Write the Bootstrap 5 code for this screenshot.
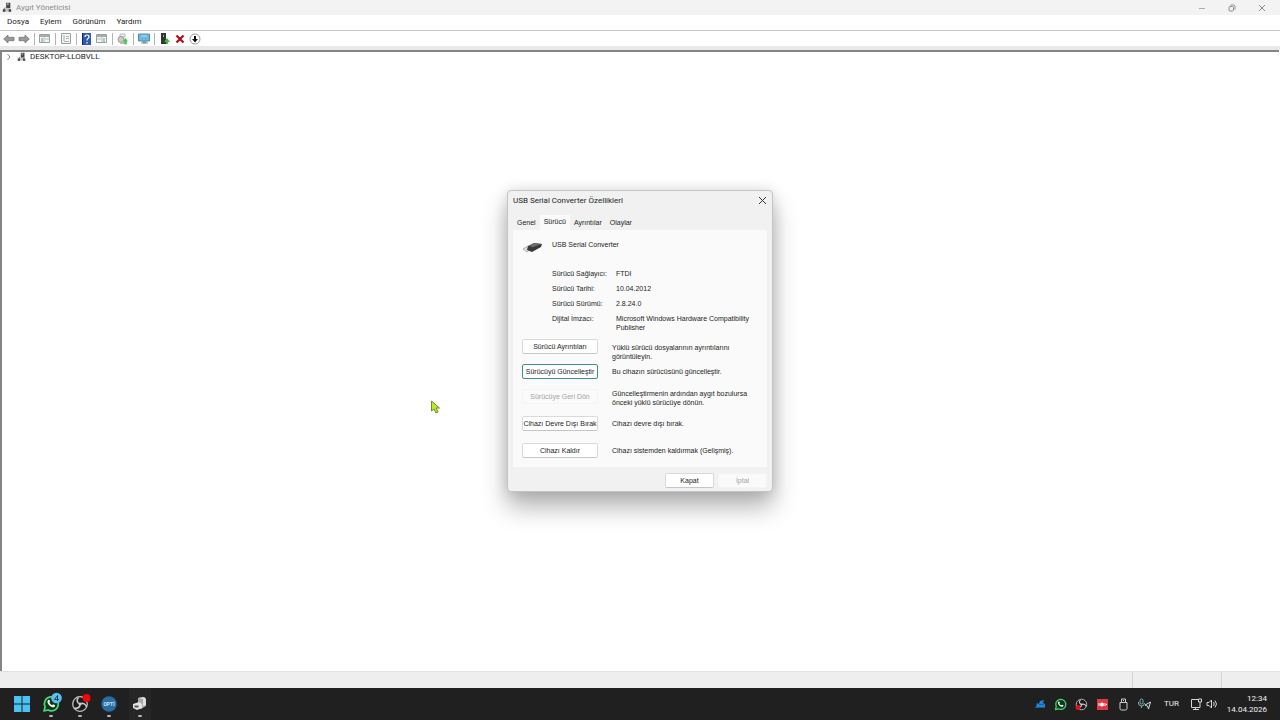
<!DOCTYPE html>
<html lang="tr">
<head>
<meta charset="utf-8">
<meta name="viewport" content="width=device-width, initial-scale=1">
<title>Aygıt Yöneticisi</title>
<link href="https://cdn.jsdelivr.net/npm/bootstrap@5.3.0/dist/css/bootstrap.min.css" rel="stylesheet">
<style>
body{font-family:Roboto,"Noto Sans",sans-serif;font-size:8px;line-height:10px;color:#1c1c1c;background:#fff}
button{font:inherit;color:inherit;background:none;border:0;padding:0}
svg{display:block;flex:none}
.titlebar{height:15px;background:#f3f3f3;color:#8c8c8c;padding:0 3px 0 2px}
.win-ctl{width:30px;height:15px;display:grid;place-items:center}
.menubar{height:15px;padding:0 7px 1px;gap:11px}
.toolbar{height:16px;border-top:1px solid #c4c4c4;padding-left:2px;gap:2px}
.tool{width:13px;height:13px;display:grid;place-items:center}
.sep{width:1px;height:12px;background:#b4b4b4;margin:0 1px 0 2px}
.strip{height:4px;background:#e9e9e9}
.tree{border-top:2px solid #858585;border-left:2px solid #858585;margin-right:1px;padding-left:3px}
.statusbar{height:17px;background:#eee;border-top:1px solid #e2e2e2;padding-right:1px}
.status-cell{border-left:1px solid #d4d4d4;width:58px}
.status-wide{width:89px}
.taskbar{height:32px;background:#202020;color:#f2f2f2;padding:0 13px}
.apps{gap:11px}
.app{position:relative;width:18px;height:32px;display:grid;place-items:center}
.app svg{overflow:visible}
.app.running::after{content:"";position:absolute;bottom:3px;left:50%;margin-left:-2px;width:4px;height:2px;border-radius:1px;background:#b5b5b5}
.app.current{width:22px;background:#262626}
.tray-cell{width:21px;display:grid;place-items:center}
.tray-tight{width:16px}
.lang{width:33px}
.clock{line-height:11px;width:47px}
.dlg{position:absolute;top:190px;width:266px;background:#f1f1f1;border:1px solid #c4c4c4;border-radius:4px;box-shadow:0 15px 24px rgba(0,0,0,.3),0 0 14px rgba(0,0,0,.12);font-family:"Liberation Sans",Arial,sans-serif;font-size:7px}
.dlg-head{height:19px;padding:0 5px;font-family:Roboto,sans-serif;font-size:8px}
.dlg-tabs{margin:5px 5px 0;height:15px}
.dlg-tabs button{height:14px;padding:0 4px}
.dlg-tabs .active{background:#fafafa;height:15px;padding-bottom:2px}
.sheet{background:#fafafa;margin:0 5px;padding:10px 9px 9px}
.dev-row{height:15px;gap:10px}
.facts{margin:14px 0 0 30px;display:grid;grid-template-columns:64px 1fr;row-gap:5px}
.facts dt{font-weight:400}
.facts dd{margin:0}
.facts dd:last-child{line-height:9px}
.acts{display:grid;grid-template-columns:76px 1fr;column-gap:14px;margin-top:7px;align-items:start;grid-template-rows:25px 25px 27px 27px 15px}
.one-line{line-height:16px}
.two-line{line-height:9px}
.push{height:15px;background:#fff;border:1px solid #dadada;border-bottom-color:#c6c6c6;border-radius:2px;white-space:nowrap;line-height:12px}
.push.primary{border-color:#3f8f8b}
.push:disabled{color:#a3a3a3;background:#fafafa;border-color:#f4f4f4}
.dlg-foot{gap:4px;padding:6px 5px 3px}
.dlg-foot .push{width:49px}
.pointer{position:absolute;left:430px;top:400px}
</style>
</head>
<body class="vh-100 d-flex flex-column overflow-hidden position-relative">
<svg width="0" height="0" class="position-absolute" aria-hidden="true">
<symbol id="pc" viewBox="0 0 12 12"><path d="M5 0h5v7H5z" fill="#4a4a4a"/><path d="M6 1h2v2H6z" fill="#aaa"/><path d="M2 7h8l1 4H1z" fill="#c4c4c4"/><path d="M1 8h3v3H1zM8 8h3v3H8z" fill="#444"/><path d="M4 6l-2 2" stroke="#666"/></symbol>
<symbol id="wa" viewBox="0 0 18 18"><path d="M2 16l1.1-4A7 7 0 1 1 6 15z" fill="#15331f" stroke="#42dc70" stroke-width="1.7" stroke-linejoin="round"/><path d="M6 5.2c.7-.8 1.3-.6 1.6.1l.5 1.3-.7 1c.7 1.4 1.6 2.1 2.800 2.600l1-.9 1.900.9c.2 1.400-1.200 2.300-2.400 2C8 11.600 5.400 8.900 5.400 6.500z" fill="#eafff0"/></symbol>
<symbol id="obs" viewBox="0 0 18 18"><circle cx="9" cy="9" r="7.300" fill="#1b1b1b" stroke="#c9c9c9" stroke-width="1.200"/><path d="M9 9C5.500 8 5.500 4.500 7.500 2.500M9 9c3.200-1.700 6 .5 6.500 3M9 9c.2 3.700-3 5-6 4" fill="none" stroke="#c9c9c9" stroke-width="1.600"/><circle cx="9" cy="9" r="1.500" fill="#ccc"/></symbol>
</svg>

<header class="titlebar d-flex align-items-center">
<svg width="10" height="11" viewBox="0 0 12 12"><use href="#pc"/></svg>
<span class="ms-1">Aygıt Yöneticisi</span>
<div class="ms-auto d-flex">
<button class="win-ctl" aria-label="Simge durumuna küçült"><svg width="8" height="8"><path d="M1 4.500h6" stroke="#aaa"/></svg></button>
<button class="win-ctl" aria-label="Önceki boyut"><svg width="8" height="8" fill="none" stroke="#8c8c8c"><rect x="1" y="2.500" width="4.500" height="4.500" rx="1"/><path d="M2.500 1h3Q7 1 7 2.500V5.500"/></svg></button>
<button class="win-ctl" aria-label="Kapat"><svg width="8" height="8"><path d="M1 1l6 6M7 1L1 7" stroke="#8c8c8c"/></svg></button>
</div>
</header>
<nav class="menubar d-flex align-items-center"><button>Dosya</button><button>Eylem</button><button>Görünüm</button><button>Yardım</button></nav>
<div class="toolbar d-flex align-items-center" role="toolbar">
<button class="tool" aria-label="Geri"><svg width="12" height="10" viewBox="0 0 12 10"><path d="M.7 5L5 1v2.300h6v3.400H5V9z" fill="#999" stroke="#777" stroke-width=".8"/></svg></button>
<button class="tool" aria-label="İleri"><svg width="12" height="10" viewBox="0 0 12 10"><path d="M11.300 5L7 1v2.300H1v3.400h6V9z" fill="#999" stroke="#777" stroke-width=".8"/></svg></button>
<span class="sep"></span>
<button class="tool" aria-label="Konsol ağacı"><svg width="11" height="9"><path d="M.5.5h10v8H.5z" fill="#f5f5f5" stroke="#9aa0a0"/><path d="M1 1h9v2H1z" fill="#a7adad"/><path d="M2 5h2M2 7h2" stroke="#58a778"/><path d="M5 3v5M6 5h4" stroke="#bbb"/></svg></button>
<span class="sep"></span>
<button class="tool" aria-label="Özellikler"><svg width="10" height="11"><path d="M.5.5h9v10h-9z" fill="#f2f5f3" stroke="#9aa0a0"/><path d="M2 3h2M2 5h2M2 7h2" stroke="#8fbfa2"/><path d="M5 3.500h3M5 5.500h3M3 8.500h5" stroke="#b5b5b5"/></svg></button>
<span class="sep"></span>
<button class="tool" aria-label="Yardım"><svg width="9" height="12"><path d="M0 0h9v12H0z" fill="#3159b4"/><path d="M0 0h1v12H0z" fill="#122b64"/><path d="M3 4q0-2 2-2t2 2q0 1-1 1.500T5 7.500M5 9v1.500" fill="none" stroke="#fff" stroke-width="1.200"/></svg></button>
<button class="tool" aria-label="Eylem bölmesi"><svg width="11" height="9"><path d="M.5.5h10v8H.5z" fill="#f5f5f5" stroke="#9aa0a0"/><path d="M1 1h9v2H1z" fill="#a7adad"/><path d="M7 5h2M7 7h2" stroke="#58a778"/><path d="M6 3v5M1 5h4" stroke="#bbb"/></svg></button>
<span class="sep"></span>
<button class="tool" aria-label="Donanım değişikliklerini tara"><svg width="11" height="12"><path d="M3 1h5v3H3z" fill="#eee" stroke="#bbb"/><circle cx="4" cy="6.500" r="3" fill="#ccc" stroke="#999"/><path d="M4 8h6v3H3z" fill="#bbb"/><path d="M7.500 11.500V8.500H5.500L8.500 5l2.500 3.500H9.500v3z" fill="#4cc552"/></svg></button>
<span class="sep"></span>
<button class="tool" aria-label="Bilgisayarı göster"><svg width="12" height="11"><path d="M.5 1h11v7H.5z" fill="#69b9dd" stroke="#4a8fb0"/><path d="M3 3h6" stroke="#b3e2f5"/><path d="M5 8h3v2H5zM3 10h7" fill="#8a9aa2" stroke="#8a9aa2"/></svg></button>
<span class="sep"></span>
<button class="tool" aria-label="Aygıtı etkinleştir"><svg width="10" height="12"><path d="M1 0h5v11H1z" fill="#303733"/><path d="M3 2h1v2H3z" fill="#aaa"/><path d="M6 11V9H4l3-4 3 4H8v2z" fill="#3fb847"/></svg></button>
<button class="tool" aria-label="Aygıtı kaldır"><svg width="10" height="10"><path d="M1.500 1.500l7 7M8.500 1.500l-7 7" stroke="#b30b15" stroke-width="2.200"/></svg></button>
<button class="tool" aria-label="Sürücüyü güncelleştir"><svg width="12" height="12"><circle cx="6" cy="6" r="5" fill="#fff" stroke="#999"/><path d="M5 3h2v3h2L6 9.500 3 6h2z" fill="#111"/></svg></button>
</div>
<div class="strip"></div>
<main class="tree flex-grow-1">
<div class="d-flex align-items-center"><svg width="8" height="8"><path d="M2.500 1l2.500 3-2.500 3" fill="none" stroke="#888"/></svg><svg class="ms-1" width="9" height="10" viewBox="0 0 12 12"><use href="#pc"/></svg><span class="ms-1">DESKTOP-LLOBVLL</span></div>
</main>
<footer class="statusbar d-flex justify-content-end"><div class="status-cell status-wide"></div><div class="status-cell"></div></footer>

<div class="taskbar d-flex align-items-center">
<div class="apps d-flex">
<button class="app" aria-label="Başlat"><svg width="16" height="16"><path d="M0 0h7.500v7.500H0zM8.500 0H16v7.500H8.500zM0 8.500h7.500V16H0zM8.500 8.500H16V16H8.500z" fill="#4cc2f4"/></svg></button>
<button class="app running" aria-label="WhatsApp"><svg width="18" height="18"><use href="#wa" width="18" height="18"/><circle cx="14.500" cy="3" r="5.300" fill="#5bc0ee"/><path d="M15.500 6V.500L12.500 4.500h4.500" fill="none" stroke="#17445c"/></svg></button>
<button class="app running" aria-label="OBS Studio"><svg width="18" height="18"><use href="#obs" width="18" height="18"/><circle cx="15.500" cy="3" r="4" fill="#ee0808"/></svg></button>
<button class="app running" aria-label="OPTİ"><svg width="16" height="16"><circle cx="8" cy="8" r="7.700" fill="#286da5"/><text x="8" y="10" text-anchor="middle" font-size="5" font-weight="700" fill="#d5e5f1">OPTİ</text></svg></button>
<button class="app running current" aria-label="Aygıt Yöneticisi"><svg width="16" height="16"><path d="M6 2l6-1 2 2v7l-5 3H6z" fill="#a9a9a9"/><path d="M6 2l5 1v7l3-1V3l-2-2z" fill="#dedede"/><path d="M1 8l6-2 3 2v4l-5 2-4-2z" fill="#e4e4e4"/><path d="M2.500 9.500h4v2h-4z" fill="#555"/></svg></button>
</div>
<div class="ms-auto d-flex align-items-center">
<span class="tray-cell"><svg width="12" height="12"><path d="M2 9l1-4 2 1 1-3 4-1-1 3 2 1v3z" fill="#2386d3"/><path d="M1 9.500h10M5 6.500h5" stroke="#175e9b"/></svg></span>
<span class="tray-cell"><svg width="13" height="13"><use href="#wa" width="13" height="13"/></svg></span>
<span class="tray-cell"><svg width="13" height="13"><use href="#obs" width="13" height="13"/><circle cx="3" cy="9.500" r="2.500" fill="#dc1420"/></svg></span>
<span class="tray-cell"><svg width="11" height="11"><path d="M0 0h11v11H0z" fill="#dc3942"/><circle cx="5" cy="5.500" r="2" fill="#fff"/><path d="M2 4v3M8 4v3M9.500 5v1" stroke="#fff"/></svg></span>
<span class="tray-cell"><svg width="10" height="13" fill="none" stroke="#ccc"><path d="M2.500 4V1h4v3M1 4.500h7v6q0 1.500-1.500 1.500h-4Q1 12 1 10.500zM4 2.500h1"/></svg></span>
<span class="tray-cell"><svg width="15" height="12" fill="none" stroke="#79b5af"><rect x="3" y="1" width="3" height="5" rx="1.500"/><path d="M1.500 4v1q0 3 3 3t3-3M4.500 8v2"/><path d="M13.500 4L8 7l2.500 1 1 3z" stroke="#bfe0dc"/></svg></span>
<span class="lang text-center">TUR</span>
<span class="tray-cell tray-tight"><svg width="13" height="13" fill="none" stroke="#d6d6d6"><path d="M8 1.500H1.500v8H10V7M3 11.500h6M5.500 10v1M8.500 1h3v3h-3zM10 4v3"/></svg></span>
<span class="tray-cell tray-tight"><svg width="12" height="12" fill="none" stroke="#d6d6d6"><path d="M1 4.500h2L5.500 2v8L3 7.500H1zM7.500 4q1.500 2 0 4M9 2.500q3 3.500 0 7"/></svg></span>
<div class="clock text-end">12:34<br>14.04.2026</div>
</div>
</div>

<section class="dlg start-50 translate-middle-x" role="dialog" aria-labelledby="dlg-title">
<div class="dlg-head d-flex align-items-center"><span id="dlg-title">USB Serial Converter Özellikleri</span><button class="ms-auto" aria-label="Kapat"><svg width="9" height="9"><path d="M1 1l7 7M8 1L1 8" stroke="#333"/></svg></button></div>
<div class="dlg-tabs d-flex align-items-end" role="tablist"><button role="tab">Genel</button><button role="tab" class="active" aria-selected="true">Sürücü</button><button role="tab">Ayrıntılar</button><button role="tab">Olaylar</button></div>
<div class="sheet">
<div class="dev-row d-flex"><svg width="20" height="15"><path d="M1 9l5-3 4 2-5 4z" fill="#ddd" stroke="#999" stroke-width=".7"/><path d="M6 6l6-3 8 1-1 3-9 5-5-2z" fill="#3b3b3b"/><path d="M7 6l6-3 6 1-8 3z" fill="#707070"/></svg><span>USB Serial Converter</span></div>
<dl class="facts mb-0"><dt>Sürücü Sağlayıcı:</dt><dd>FTDI</dd><dt>Sürücü Tarihi:</dt><dd>10.04.2012</dd><dt>Sürücü Sürümü:</dt><dd>2.8.24.0</dd><dt>Dijital İmzacı:</dt><dd>Microsoft Windows Hardware Compatibility Publisher</dd></dl>
<div class="acts">
<button class="push">Sürücü Ayrıntıları</button><span class="two-line pt-1">Yüklü sürücü dosyalarının ayrıntılarını<br>görüntüleyin.</span>
<button class="push primary">Sürücüyü Güncelleştir</button><span class="one-line">Bu cihazın sürücüsünü güncelleştir.</span>
<button class="push" disabled>Sürücüye Geri Dön</button><span class="two-line">Güncelleştirmenin ardından aygıt bozulursa<br>önceki yüklü sürücüye dönün.</span>
<button class="push">Cihazı Devre Dışı Bırak</button><span class="one-line">Cihazı devre dışı bırak.</span>
<button class="push">Cihazı Kaldır</button><span class="one-line">Cihazı sistemden kaldırmak (Gelişmiş).</span>
</div>
</div>
<div class="dlg-foot d-flex justify-content-end"><button class="push">Kapat</button><button class="push" disabled>İptal</button></div>
</section>
<svg class="pointer" width="11" height="14"><path d="M1.500 1v10l2.500-2 2 4 2-1-2-4h3.500z" fill="#b4ef27" stroke="#6f8a2c"/></svg>
</body>
</html>
